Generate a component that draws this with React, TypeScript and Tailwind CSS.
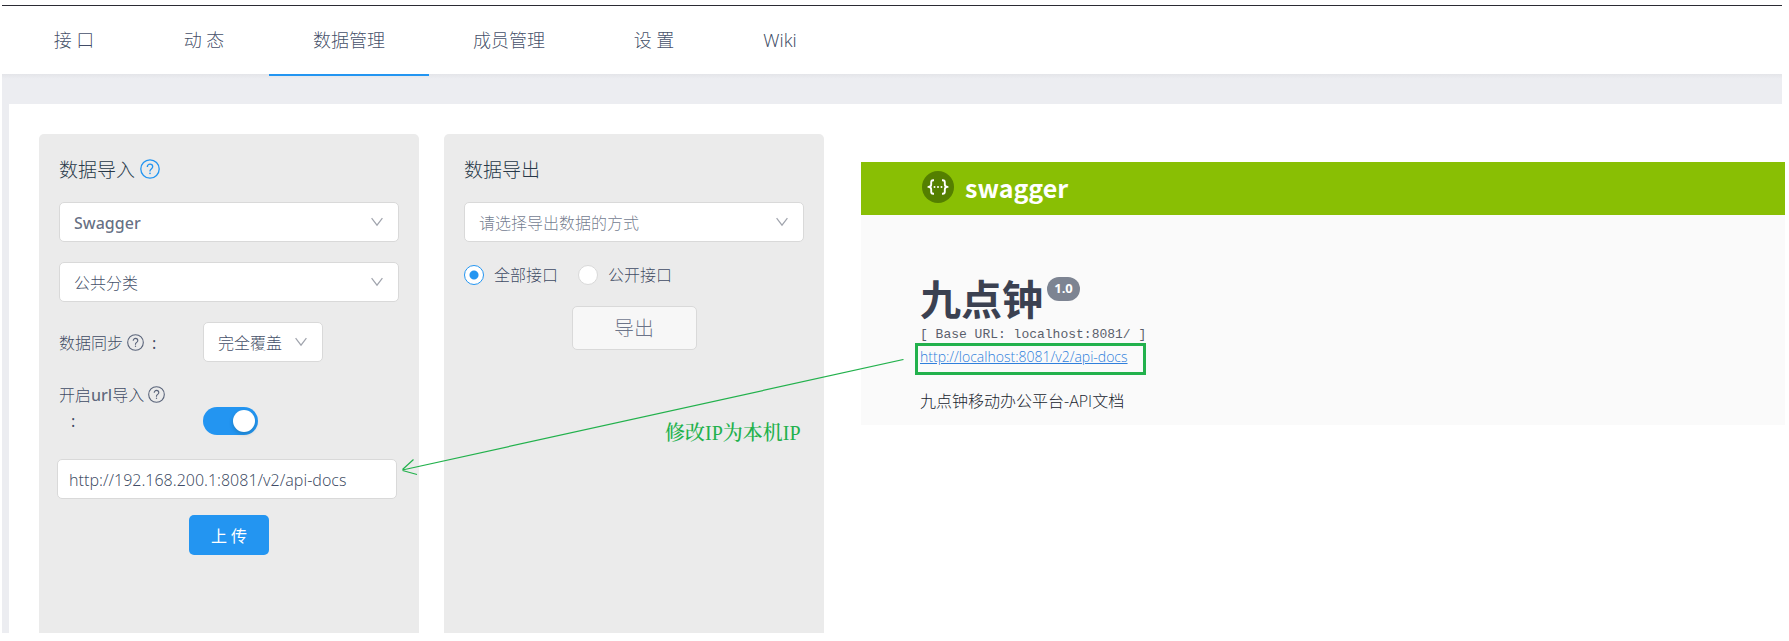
import { useState } from 'react';
import type { ReactNode } from 'react';
import clsx from 'clsx';

const TABS = [
  { label: '接 口', width: 'w-[130px]' },
  { label: '动 态', width: 'w-[130px]' },
  { label: '数据管理', width: 'w-40' },
  { label: '成员管理', width: 'w-40' },
  { label: '设 置', width: 'w-[130px]' },
  { label: 'Wiki', width: 'w-[122px]' },
];

function HelpIcon({ className }: { className?: string }) {
  return (
    <svg viewBox="0 0 20 20" fill="none" stroke="currentColor" strokeWidth="1.300" className={className} aria-hidden="true">
      <circle cx="10" cy="10" r="9.200" />
      <path d="M7.300 7.900c0-1.600 1.200-2.700 2.700-2.700s2.700 1.100 2.700 2.600c0 2-2.700 2.200-2.700 4.100v.6" />
      <circle cx="10" cy="14.400" r=".8" fill="currentColor" stroke="none" />
    </svg>
  );
}

function ChevronIcon({ className }: { className?: string }) {
  return (
    <svg viewBox="0 0 12 12" fill="none" stroke="currentColor" strokeWidth="1.200" className={className} aria-hidden="true">
      <path d="M.6 2.200L6 9.200l5.400-7" />
    </svg>
  );
}

function Tabs() {
  const [active, setActive] = useState('数据管理');
  return (
    <nav className="flex h-[70px] px-[7px]" aria-label="项目">
      {TABS.map((tab) => (
        <a
          key={tab.label}
          href="#"
          onClick={() => setActive(tab.label)}
          className={clsx(
            'flex items-center justify-center border-b-2 text-[18px]',
            tab.width,
            active === tab.label ? 'border-[#2395f1]' : 'border-transparent',
          )}
        >
          {tab.label}
        </a>
      ))}
    </nav>
  );
}

interface SelectProps {
  label: string;
  options: string[];
  className?: string;
}

function Select({ label, options, className }: SelectProps) {
  return (
    <div className={clsx('relative h-10', className)}>
      <select
        aria-label={label}
        className="h-full w-full appearance-none rounded-[5px] border border-[#d9d9d9] bg-white pt-0.5 pr-10 pl-[14px] text-base outline-none"
      >
        {options.map((option) => (
          <option key={option}>{option}</option>
        ))}
      </select>
      <ChevronIcon className="pointer-events-none absolute top-[14px] right-4 size-3 text-[#a0a4ad]" />
    </div>
  );
}

function Card({ title, children }: { title: ReactNode; children: ReactNode }) {
  return (
    <section className="min-h-[499px] w-[380px] rounded-t-[5px] bg-[#ebebeb] px-5 pt-[22px]">
      <h3 className="mb-[18px] flex h-7 items-center gap-[5px] text-[19px] text-[#273848]">{title}</h3>
      {children}
    </section>
  );
}

function ImportCard() {
  const [on, setOn] = useState(true);
  const [url, setUrl] = useState('http://192.168.200.1:8081/v2/api-docs');
  return (
    <Card
      title={
        <>
          数据导入
          <HelpIcon className="mb-0.5 size-5 text-[#2395f1]" />
        </>
      }
    >
      <div className="flex flex-col gap-5">
        <Select label="导入方式" options={['Swagger']} className="font-medium text-[#0d1b3e]/65" />
        <Select label="分类" options={['公共分类']} />
        <div className="grid grid-cols-[144px_1fr] items-center">
          <span className="flex items-center gap-1 pt-0.5">
            数据同步
            <HelpIcon className="mb-0.5 size-[17px] text-[#0d1b3e]/65" />
            <span className="pl-1 font-normal">:</span>
          </span>
          <Select label="数据同步" options={['完全覆盖']} className="w-[120px]" />
        </div>
      </div>
      <div className="mt-5 grid grid-cols-[144px_1fr] items-end">
        <div className="pb-px leading-[26px]">
          <span className="flex items-center gap-1">
            <span id="url-switch">
              开启<span className="font-medium text-[#0d1b3e]/65">url</span>导入
            </span>
            <HelpIcon className="mb-0.5 size-[17px] text-[#0d1b3e]/65" />
          </span>
          <span className="block pl-3 font-normal">:</span>
        </div>
        <button
          type="button"
          role="switch"
          aria-checked={on}
          aria-labelledby="url-switch"
          onClick={() => setOn(!on)}
          className={clsx(
            'flex h-7 w-[55px] items-center rounded-full px-[3px]',
            on ? 'justify-end bg-[#2395f1]' : 'justify-start bg-[#bfbfbf]',
          )}
        >
          <span className="size-[22px] rounded-full bg-white shadow-[0_2px_4px_rgba(0,35,11,0.2)]" />
        </button>
      </div>
      <input
        type="text"
        aria-label="url"
        value={url}
        onChange={(event) => setUrl(event.target.value)}
        className="mt-6 -ml-0.5 h-10 w-full rounded-[5px] border border-[#d9d9d9] bg-white px-[11px] pt-0.5 text-base outline-none"
      />
      <div className="mt-4 flex justify-center">
        <button type="button" className="h-10 w-20 rounded-[5px] bg-[#2395f1] pt-0.5 text-base font-normal text-white">
          上 传
        </button>
      </div>
    </Card>
  );
}

function ExportCard() {
  const [scope, setScope] = useState('全部接口');
  return (
    <Card title="数据导出">
      <Select label="导出方式" options={['请选择导出数据的方式']} className="text-[#0d1b3e]/60" />
      <div className="mt-5 flex gap-5">
        {['全部接口', '公开接口'].map((item) => (
          <label key={item} className="flex h-[26px] items-center gap-[10px]">
            <input
              type="radio"
              name="scope"
              checked={scope === item}
              onChange={() => setScope(item)}
              className="size-5 appearance-none rounded-full border border-[#d9d9d9] bg-white checked:border-[#2395f1] checked:bg-[radial-gradient(circle,#2395f1_4px,#fff_5px)]"
            />
            {item}
          </label>
        ))}
      </div>
      <div className="mt-[18px] flex justify-center">
        <button
          type="button"
          className="h-11 w-[125px] rounded-[5px] border border-[#d9d9d9] bg-[#f7f7f7] pt-0.5 text-[20px] text-[#0d1b3e]/60"
        >
          导出
        </button>
      </div>
    </Card>
  );
}

function SwaggerLogo() {
  return (
    <svg viewBox="0 0 32 32" className="size-8" aria-hidden="true">
      <circle cx="16" cy="16" r="16" fill="#547f00" />
      <g fill="none" stroke="#fff" strokeWidth="1.900" strokeLinejoin="round">
        <path d="M12 9.200h-.8c-1.400 0-2 .7-2 2v2.300c0 1.500-.8 2.400-2.800 2.400 2 0 2.800 1 2.800 2.500v2.300c0 1.300.6 2 2 2h.8" />
        <path d="M20 9.200h.8c1.400 0 2 .7 2 2v2.300c0 1.500.8 2.400 2.800 2.400-2 0-2.800 1-2.800 2.500v2.300c0 1.300-.6 2-2 2H20" />
      </g>
      <circle cx="12.500" cy="16" r="1" fill="#fff" />
      <circle cx="16" cy="16" r="1" fill="#fff" />
      <circle cx="19.500" cy="16" r="1" fill="#fff" />
    </svg>
  );
}

function SwaggerPanel() {
  return (
    <section className="mt-7 mr-1 min-w-0 flex-1 self-start bg-[#fafafa] font-['Open_Sans','Noto_Sans_CJK_SC',sans-serif] font-normal text-[#3b4151]">
      <header className="flex h-[53px] items-center gap-[11px] bg-[#89bf04] px-[61px] pb-1">
        <SwaggerLogo />
        <span className="font-['Noto_Sans_CJK_SC',sans-serif] text-[25px] leading-8 font-bold text-white">swagger</span>
      </header>
      <div className="px-[59px] pt-[59px] pb-3">
        <div className="flex items-start gap-1">
          <h2 className="text-[41px] leading-[50px] font-bold">九点钟</h2>
          <span className="mt-[3px] flex h-6 w-[33px] items-center justify-center rounded-full bg-[#7d8492] text-[13px] font-bold text-white">
            1.0
          </span>
        </div>
        <pre className="pt-0.5 font-['Liberation_Mono',monospace] text-[13px] leading-[17px] text-[#5a5f6c]">
          [ Base URL: localhost:8081/ ]
        </pre>
        <div className="-ml-[5px] flex h-8 w-[231px] items-center border-3 border-[#22b14c] px-0.5 pb-1">
          <a href="#" className="text-sm font-light text-[#2f7fdc] underline">
            http://localhost:8081/v2/api-docs
          </a>
        </div>
        <p className="mt-[14px] text-base leading-6 font-light text-[#20242e]">九点钟移动办公平台-API文档</p>
      </div>
    </section>
  );
}

function Annotation() {
  return (
    <div className="pointer-events-none absolute top-[359px] left-[402px] text-[#22b14c]">
      <svg width="502" height="118" viewBox="0 0 502 118" fill="none" stroke="currentColor" strokeWidth="1.200" aria-hidden="true">
        <path d="M501.500.5L.5 111M11.500 100.500L.5 110.500M.5 111.500L15 115.500" />
      </svg>
      <span className="absolute top-[60px] left-[263px] font-['Liberation_Serif','Noto_Serif_CJK_SC','Noto_Sans_CJK_SC',serif] text-[20px] leading-7 font-medium whitespace-nowrap">
        修改IP为本机IP
      </span>
    </div>
  );
}

export default function App() {
  return (
    <div className="relative bg-white pt-[5px] pl-0.5 font-['Noto_Sans','Noto_Sans_CJK_SC',sans-serif] text-base font-light text-[#0d1b3e]/80">
      <div className="mr-[7px] border-t border-[#2b2b34] bg-[linear-gradient(#fff_68px,#e4e5e9_68px,#ecedf1_73px)]">
        <Tabs />
        <div className="h-7" />
      </div>
      <main className="flex items-start border-l-[7px] border-[#ecedf1] pt-[30px] pl-[30px]">
        <div className="flex gap-[25px] pr-[37px]">
          <ImportCard />
          <ExportCard />
        </div>
        <SwaggerPanel />
      </main>
      <Annotation />
    </div>
  );
}
